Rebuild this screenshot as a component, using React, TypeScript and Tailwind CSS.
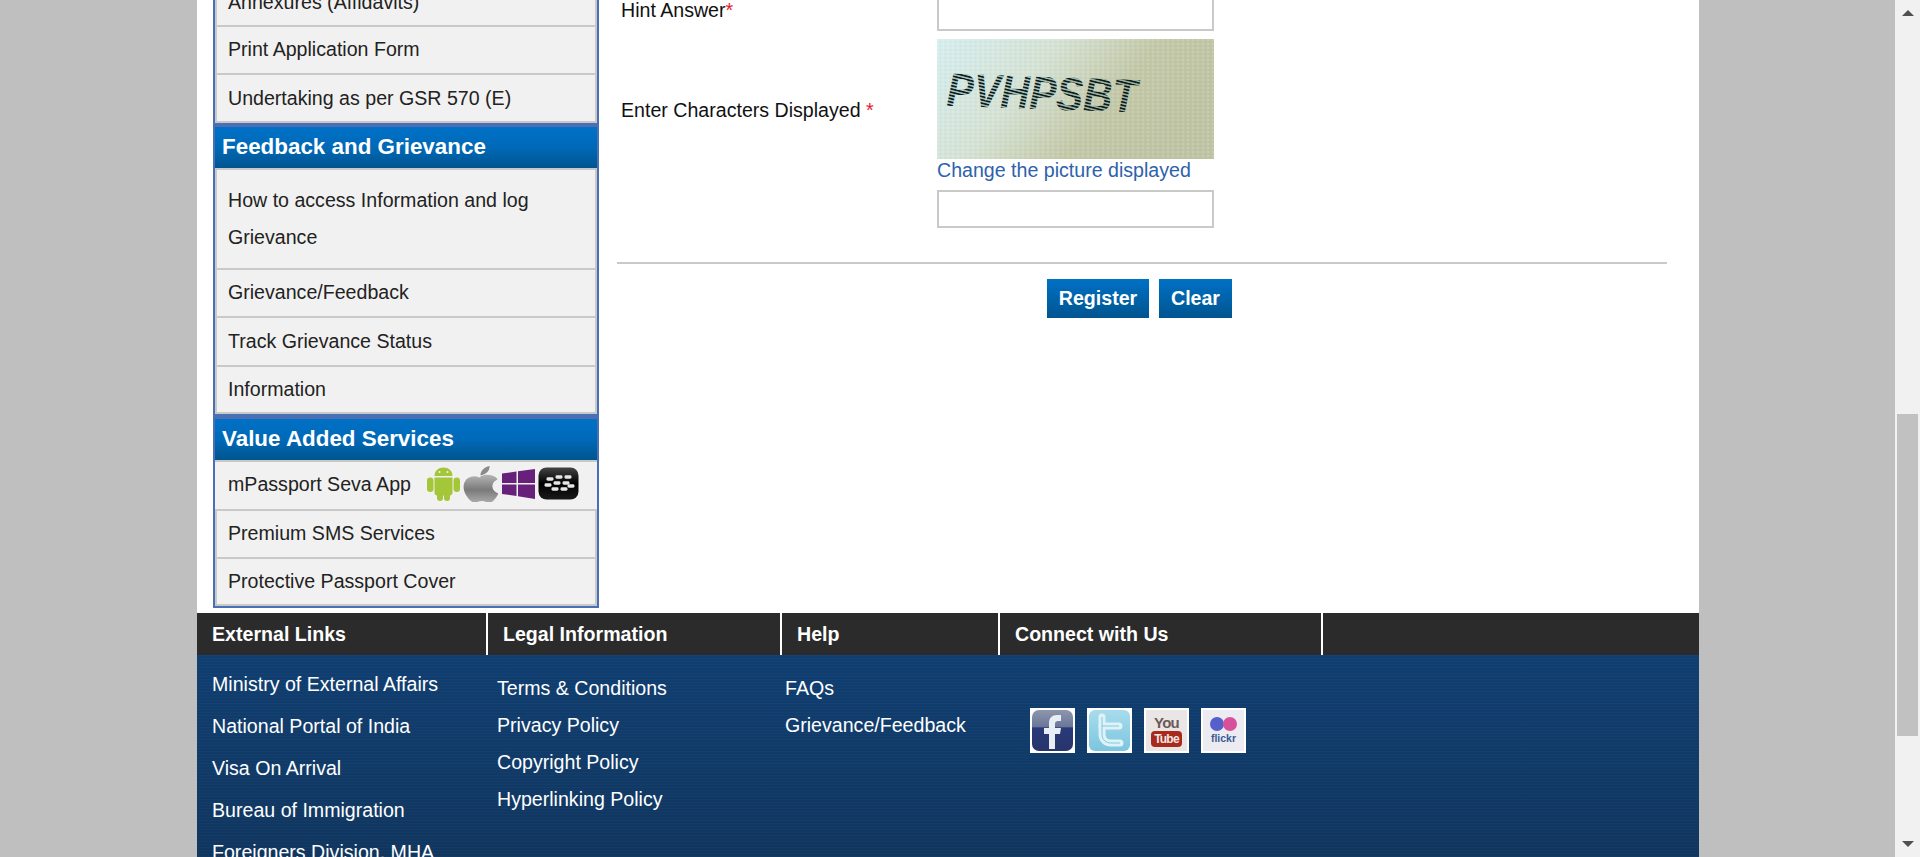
const FONT = "font-['Liberation_Sans',Arial,sans-serif]";

function Row({ children, h = "h-[46px]", extra = "" }: { children: React.ReactNode; h?: string; extra?: string }) {
  return (
    <div className={`${h} ${extra} bg-[#f1f1f1] border-x-2 border-[#c9c9c9] border-b-2 flex items-center pl-[11px] text-[#222] text-[19.6px]`}>
      {children}
    </div>
  );
}

function SectionHead({ children }: { children: React.ReactNode }) {
  return (
    <div className="h-[41px] pl-[7px] pb-[2px] flex items-center bg-gradient-to-b from-[#0071c6] via-[#0069b8] to-[#00558f] text-white font-bold text-[22.4px]">
      {children}
    </div>
  );
}

function Android() {
  return (
    <svg width="33" height="35" viewBox="0 0 33 35">
      <g fill="#a4c639">
        <rect x="0" y="11.5" width="6.5" height="14.5" rx="3.2" />
        <rect x="26.5" y="11.5" width="6.5" height="14.5" rx="3.2" />
        <rect x="10" y="26" width="6" height="9" rx="3" />
        <rect x="17" y="26" width="6" height="9" rx="3" />
        <path d="M7.5 11.5h18v15a3 3 0 0 1-3 3h-12a3 3 0 0 1-3-3z" />
        <path d="M7.5 10C7.5 4.5 11.5 1.5 16.5 1.5s9 3 9 8.5z" />
      </g>
      <circle cx="12.5" cy="6" r="1" fill="#f1f1f1" />
      <circle cx="20.5" cy="6" r="1" fill="#f1f1f1" />
    </svg>
  );
}

function Apple() {
  return (
    <svg width="36" height="36" viewBox="4 1 29 33" preserveAspectRatio="none">
      <defs>
        <linearGradient id="ap" x1="0" y1="0" x2="0" y2="1">
          <stop offset="0" stopColor="#b5b5b5" />
          <stop offset="0.55" stopColor="#7a7a7a" />
          <stop offset="1" stopColor="#aaaaaa" />
        </linearGradient>
      </defs>
      <path
        fill="url(#ap)"
        d="M18 10.5c3-1.6 6-2.2 9.5-.7 2 .8 3.4 2 4.4 3.4-3 1.9-4.4 4-4.2 6.8.2 3 1.9 5 4.8 6.2-1 2.6-2.4 5-4.2 6.8-1.8 1.7-3.7 1.8-5.6.9-2.4-1-4.6-1-7 0-2 .9-3.7.8-5.5-1-4-4-6.7-10.6-5.4-15.7 1-4.3 4.6-7 8.6-6.9 1.6.1 3 .8 4.6 1.2z"
      />
      <path fill="#8a8a8a" d="M18 9.5c.1-4 3-7.4 7.4-8.5.2 4.4-3 8-7.4 8.5z" />
    </svg>
  );
}

function WindowsLogo() {
  return (
    <svg width="33" height="30" viewBox="0 0 33 30">
      <g fill="#68217a">
        <path d="M0 4.5l14.5-2v11.5H0z" />
        <path d="M16 2.2L33 0v14H16z" />
        <path d="M0 15.5h14.5V27L0 25z" />
        <path d="M16 15.5h17V30l-17-2.7z" />
      </g>
    </svg>
  );
}

function BlackBerry() {
  const dots = [
    [12, 12], [21, 10], [30, 10],
    [10, 18], [19, 16], [28, 16],
    [17, 22], [26, 22], [33, 19],
  ];
  return (
    <svg width="41" height="33" viewBox="0 0 41 33">
      <defs>
        <linearGradient id="bb" x1="0" y1="0" x2="0" y2="1">
          <stop offset="0" stopColor="#444" />
          <stop offset="0.5" stopColor="#000" />
          <stop offset="1" stopColor="#1a1a1a" />
        </linearGradient>
      </defs>
      <rect x="0.5" y="0.5" width="40" height="32" rx="8" fill="url(#bb)" />
      {dots.map(([x, y], i) => (
        <rect key={i} x={x - 3.5} y={y - 1.7} width="7" height="3.4" rx="1.4" fill="#e6e6e6" />
      ))}
    </svg>
  );
}

function Captcha() {
  return (
    <svg width="277" height="120" viewBox="0 0 277 120" className="block">
      <defs>
        <linearGradient id="cbg" x1="0" y1="0" x2="1" y2="0.35">
          <stop offset="0" stopColor="#d6eef0" />
          <stop offset="0.4" stopColor="#d5e2d4" />
          <stop offset="0.72" stopColor="#c3c8a8" />
          <stop offset="1" stopColor="#bfc4a4" />
        </linearGradient>
        <pattern id="cdots" width="5" height="4" patternUnits="userSpaceOnUse">
          <rect x="0" y="0" width="2" height="2" fill="#ffffff" opacity="0.13" />
          <rect x="2.5" y="2" width="2" height="2" fill="#6f7f6a" opacity="0.06" />
        </pattern>
        <pattern id="cstripe" width="3" height="3.2" patternUnits="userSpaceOnUse" patternTransform="rotate(12)">
          <rect width="3" height="1.7" fill="#0f1a1c" />
          <rect y="1.7" width="3" height="1.5" fill="#4f8d88" opacity="0.35" />
        </pattern>
      </defs>
      <rect width="277" height="120" fill="url(#cbg)" />
      <rect width="277" height="120" fill="url(#cdots)" />
      <text
        x="10"
        y="70"
        fontFamily="'Liberation Sans', Arial, sans-serif"
        fontWeight="700"
        fontStyle="italic"
        fontSize="47"
        fill="url(#cstripe)"
        textLength="190"
        lengthAdjust="spacingAndGlyphs"
        transform="rotate(2 100 50)"
      >
        PVHPSBT
      </text>
    </svg>
  );
}

function Social() {
  return (
    <div className="flex gap-[12px]">
      <svg width="45" height="45" viewBox="0 0 45 45">
        <defs>
          <linearGradient id="fb" x1="0" y1="0" x2="0" y2="1">
            <stop offset="0" stopColor="#8e96ad" />
            <stop offset="0.42" stopColor="#6a7698" />
            <stop offset="0.43" stopColor="#2a3a78" />
            <stop offset="1" stopColor="#27346c" />
          </linearGradient>
        </defs>
        <rect width="45" height="45" fill="#fff" />
        <rect x="2" y="2" width="41" height="41" rx="7" fill="url(#fb)" />
        <path d="M19 41V26h-5v-6h5v-5c0-5 3-8 8-8h4v6h-3c-2 0-3 1-3 3v4h6l-1 6h-5v15z" fill="#e9edf6" />
      </svg>
      <svg width="45" height="45" viewBox="0 0 45 45">
        <defs>
          <linearGradient id="tw" x1="0" y1="0" x2="0" y2="1">
            <stop offset="0" stopColor="#a8dcec" />
            <stop offset="1" stopColor="#7cc5df" />
          </linearGradient>
        </defs>
        <rect width="45" height="45" fill="#fff" />
        <rect x="2" y="2" width="41" height="41" rx="6" fill="url(#tw)" />
        <path d="M15 9v17c0 6 4 9 9 9h9" fill="none" stroke="#dff2f8" strokeWidth="7" strokeLinecap="round" />
        <path d="M15 18h17" stroke="#dff2f8" strokeWidth="7" strokeLinecap="round" />
        <path d="M15 9v17c0 6 4 9 9 9h9M15 18h17" fill="none" stroke="#45aed0" strokeWidth="1" opacity="0.6" />
      </svg>
      <div className="w-[45px] h-[45px] bg-[#ebe6e6] border-2 border-white flex flex-col items-center justify-center font-bold leading-none">
        <span className="text-[#6b5a58] text-[15px] tracking-[-0.8px]">You</span>
        <span className="bg-[#a82a1c] text-[#f3e6e3] text-[12px] rounded-[4px] px-[3px] py-[2px] mt-[1px] tracking-[-0.8px]">Tube</span>
      </div>
      <div className="w-[45px] h-[45px] bg-[#ecebf2] border-2 border-white flex flex-col items-center justify-center">
        <span className="flex">
          <span className="w-[14px] h-[14px] rounded-full bg-[#5560c8]" />
          <span className="w-[14px] h-[14px] rounded-full bg-[#d8509a] -ml-[1px]" />
        </span>
        <span className="text-[10.5px] font-bold leading-none mt-[2px] text-[#3b5a92]">flickr</span>
      </div>
    </div>
  );
}

function Scrollbar() {
  return (
    <div className="w-[25px] h-full shrink-0 bg-[#f1f1f1] flex flex-col items-center">
      <svg width="12" height="6" viewBox="0 0 12 6" className="mt-[10px] shrink-0"><path d="M6 0l6 6H0z" fill="#505050" /></svg>
      <div className="w-[21px] h-[322px] bg-[#c1c1c1] mt-[398px] shrink-0" />
      <div className="flex-1" />
      <svg width="12" height="6" viewBox="0 0 12 6" className="mb-[10px] shrink-0"><path d="M6 6l6-6H0z" fill="#505050" /></svg>
    </div>
  );
}

export default function App() {
  return (
    <div className={`flex h-screen overflow-hidden bg-[#bfbfbf] ${FONT}`}>
      <div className="flex-1 min-w-0 h-full overflow-hidden">
        <div className="ml-[197px] w-[1502px] bg-white">
          <div className="flex h-[613px] overflow-hidden">
            {/* Sidebar */}
            <div className="w-[386px] ml-[16px] shrink-0 self-start -mt-[22px] border-2 border-[#4b6fb3] h-[630px] bg-[#f1f1f1]">
              <Row h="h-[47px]">Annexures (Affidavits)</Row>
              <Row h="h-[48px]"><span className="-mt-[1px]">Print Application Form</span></Row>
              <Row h="h-[48px]"><span className="mt-[1px]">Undertaking as per GSR 570 (E)</span></Row>
              <div className="h-[4px] bg-[#4b6fb3] -mx-[2px]" />
              <SectionHead>Feedback and Grievance</SectionHead>
              <div className="h-[2px] bg-[#c9c9c9]" />
              <Row h="h-[100px]" extra="leading-[37px]">
                <span className="-mt-[1px]">How to access Information and log<br />Grievance</span>
              </Row>
              <Row h="h-[48px]"><span className="-mt-[1px]">Grievance/Feedback</span></Row>
              <Row h="h-[49px]">Track Grievance Status</Row>
              <Row h="h-[47px]">Information</Row>
              <div className="h-[5px] bg-[#4b6fb3] -mx-[2px]" />
              <SectionHead>Value Added Services</SectionHead>
              <div className="h-[2px] bg-[#c9c9c9]" />
              <div className="h-[49px] bg-[#f1f1f1] border-b-2 border-[#c9c9c9] flex items-center pl-[13px] text-[#222] text-[19.6px]">
                <span className="w-[199px] -mt-[1px] shrink-0">mPassport Seva App</span>
                <span className="flex items-center gap-[3px] -mt-[4px]">
                  <Android />
                  <Apple />
                  <WindowsLogo />
                  <BlackBerry />
                </span>
              </div>
              <Row h="h-[48px]"><span className="-mt-[1px]">Premium SMS Services</span></Row>
              <Row h="h-[47px]"><span className="mt-[1px]">Protective Passport Cover</span></Row>
            </div>
            {/* Form */}
            <div className="ml-[18px] w-[1050px] shrink-0 text-[19.6px] text-[#111]">
              <div className="ml-[4px] w-[1050px] -mt-[2px] flex">
                <div className="w-[315px] h-[33px] flex items-start">
                  <span className="leading-[24px]">Hint Answer<span className="text-[#e8192c]">*</span></span>
                </div>
                <div className="ml-[1px] w-[277px] h-[33px] border-2 border-t-0 border-[#c9c9c9]" />
              </div>
              <div className="ml-[4px] mt-[8px] flex">
                <div className="w-[316px] h-[120px] flex items-center pt-[24px]">
                  <span>Enter Characters Displayed <span className="text-[#e8192c]">*</span></span>
                </div>
                <div className="w-[277px]">
                  <Captcha />
                  <div className="text-[#2d62ac] h-[24px] mb-[7px] flex items-center">Change the picture displayed</div>
                  <div className="h-[38px] border-2 border-[#c9c9c9]" />
                </div>
              </div>
              <div className="h-[2px] bg-[#c9c9c9] mt-[34px] w-[1050px]" />
              <div className="flex justify-center gap-[10px] mt-[15px] -ml-[5px]">
                <div className="w-[102px] h-[39px] flex items-center justify-center text-white font-bold bg-gradient-to-b from-[#0071c6] to-[#00558f]">Register</div>
                <div className="w-[73px] h-[39px] flex items-center justify-center text-white font-bold bg-gradient-to-b from-[#0071c6] to-[#00558f]">Clear</div>
              </div>
            </div>
          </div>
          {/* Footer */}
          <div className="h-[244px] overflow-hidden bg-[repeating-linear-gradient(0deg,rgba(255,255,255,0.018)_0_1px,transparent_1px_3px),linear-gradient(#104075,#10365f)]">
            <div className="h-[42px] bg-[#2b2b2b] flex text-white font-bold text-[19.6px]">
              <div className="w-[291px] pl-[15px] pt-[1px] flex items-center border-r-2 border-white">External Links</div>
              <div className="w-[294px] pl-[15px] pt-[1px] flex items-center border-r-2 border-white">Legal Information</div>
              <div className="w-[218px] pl-[15px] pt-[1px] flex items-center border-r-2 border-white">Help</div>
              <div className="w-[323px] pl-[15px] pt-[1px] flex items-center border-r-2 border-white">Connect with Us</div>
            </div>
            <div className="flex text-white text-[19.6px]">
              <div className="w-[300px] pl-[15px] pt-[8px] shrink-0 flex flex-col leading-[42px]">
                <span>Ministry of External Affairs</span>
                <span>National Portal of India</span>
                <span>Visa On Arrival</span>
                <span>Bureau of Immigration</span>
                <span>Foreigners Division, MHA</span>
              </div>
              <div className="w-[288px] pt-[15px] shrink-0 flex flex-col leading-[37px]">
                <span>Terms &amp; Conditions</span>
                <span>Privacy Policy</span>
                <span>Copyright Policy</span>
                <span>Hyperlinking Policy</span>
              </div>
              <div className="w-[245px] pt-[15px] shrink-0 flex flex-col leading-[37px]">
                <span>FAQs</span>
                <span>Grievance/Feedback</span>
              </div>
              <div className="pt-[53px]">
                <Social />
              </div>
            </div>
          </div>
        </div>
      </div>
      <Scrollbar />
    </div>
  );
}
